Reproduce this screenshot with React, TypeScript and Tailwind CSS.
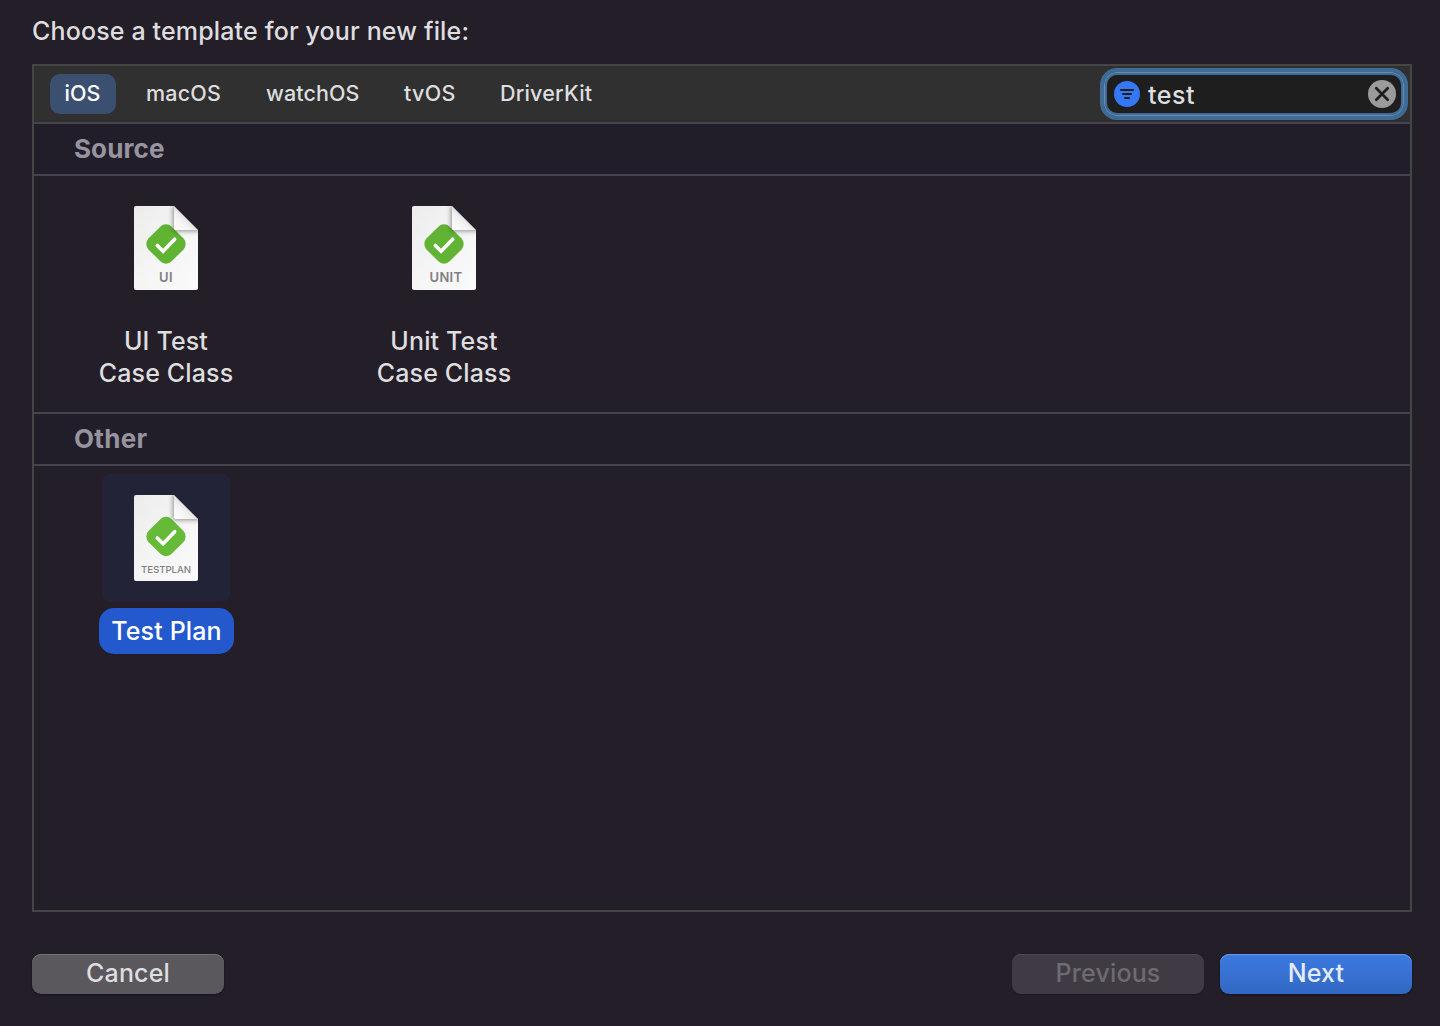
import { useId } from "react";

function DocumentIcon({ label, labelSize, labelSpacing, labelX = 32, labelY = 76, checkY = 38, height = 84, green = "#61b333" }: {
  label: string;
  labelSize: number;
  labelSpacing: number;
  labelX?: number;
  labelY?: number;
  checkY?: number;
  height?: number;
  green?: string;
}) {
  const id = useId();
  return (
    <svg width="64" height={height} viewBox={`0 0 64 ${height}`} className="block overflow-visible">
      <defs>
        <linearGradient id={`${id}page`} x1="0" y1="0" x2="1" y2="1">
          <stop offset="0" stopColor="#ececec" />
          <stop offset="0.5" stopColor="#f5f5f5" />
          <stop offset="1" stopColor="#fafafa" />
        </linearGradient>
        <linearGradient id={`${id}fold`} x1="0" y1="1" x2="0.55" y2="0.4">
          <stop offset="0" stopColor="#ffffff" />
          <stop offset="0.6" stopColor="#f3f3f3" />
          <stop offset="1" stopColor="#dcdcdc" />
        </linearGradient>
        <filter id={`${id}blur`} x="-50%" y="-50%" width="200%" height="200%">
          <feGaussianBlur stdDeviation="2.6" />
        </filter>
        <clipPath id={`${id}clip`}>
          <path d={`M2 0H40L64 24V${height - 2}a2 2 0 0 1-2 2H2a2 2 0 0 1-2-2V2a2 2 0 0 1 2-2Z`} />
        </clipPath>
      </defs>
      <g clipPath={`url(#${id}clip)`}>
        <rect width="64" height={height} fill={`url(#${id}page)`} />
        <rect x="15.75" y={checkY - 16.25} width="32.5" height="32.5" rx="8" fill={green} transform={`rotate(45 32 ${checkY})`} />
        <path d="M39 0V25H66V21L44 -1Z" fill="#000" opacity="0.42" filter={`url(#${id}blur)`} />
        <path d="M40 0L64 24H41.5a1.5 1.5 0 0 1-1.5-1.5Z" fill={`url(#${id}fold)`} />
      </g>
      <path d={`M23.3 ${checkY + 1.5}L29.1 ${checkY + 7.3}L40.7 ${checkY - 4.8}`} fill="none" stroke="#fff" strokeWidth="3.6" strokeLinecap="round" strokeLinejoin="miter" />
      <text x={labelX} y={labelY} textAnchor="middle" fontSize={labelSize} letterSpacing={labelSpacing} fontWeight={labelSize > 11 ? 600 : 450} fill="#808080">
        {label}
      </text>
    </svg>
  );
}

function SectionHeader({ title, className }: { title: string; className: string }) {
  return (
    <h2 className={`flex h-[54px] items-center border-y-2 border-[#45434b] bg-[#211e29] pl-10 text-[26px] leading-8 font-bold text-[#98949f] ${className}`}>
      {title}
    </h2>
  );
}

const tabs = [
  { name: "macOS", className: "ml-[30px] w-[75px] tracking-[0.2px]" },
  { name: "watchOS", className: "ml-[45px] w-[94px] tracking-[0.1px]" },
  { name: "tvOS", className: "ml-[44px] w-[52px] tracking-[0.3px]" },
  { name: "DriverKit", className: "ml-[44px] w-[92px] tracking-[0.2px]" },
];

export default function App() {
  return (
    <main className="flex h-[1026px] w-[1440px] flex-col overflow-hidden bg-[#231e28] px-8 font-['Inter',sans-serif] text-[25px] leading-8 font-[450] tracking-[0.15px] text-[#dedddf]">
      <h1 className="mt-[15px] h-[49px] whitespace-nowrap">Choose a template for your new file:</h1>

      <section className="flex h-[848px] w-[1380px] shrink-0 flex-col border-2 border-[#454545]">
        <nav className="flex h-14 shrink-0 items-center bg-[#303030] pl-4 text-[21.5px] whitespace-nowrap">
          <button className="h-10 w-[66px] rounded-[10px] bg-[#3b5070] pr-px pb-0.5 text-white">iOS</button>
          {tabs.map((tab) => (
            <button key={tab.name} className={`pb-0.5 text-left ${tab.className}`}>{tab.name}</button>
          ))}
          <div className="mr-[2px] ml-auto flex h-[52px] w-[308px] items-center rounded-[17px] border-4 border-[#3f6b94] bg-[#1e1e1e] px-2.5 text-[25px] shadow-[inset_0_0_0_1px_#5f8eba,inset_0_0_0_3px_#3f6b94]">
            <svg width="26" height="26" viewBox="0 0 26 26">
              <circle cx="13" cy="13" r="13" fill="#3478f6" />
              <path d="M7 9H19M9 13H17M11 17H15" stroke="#1e1e1e" strokeWidth="2" strokeLinecap="round" />
            </svg>
            <span className="mt-px ml-2 tracking-[0.5px]">test</span>
            <svg width="28" height="28" viewBox="0 0 28 28" className="-mr-[2px] ml-auto">
              <circle cx="14" cy="14" r="14" fill="#9b9b9b" />
              <path d="M8.3 8.3L19.7 19.7M19.7 8.3L8.3 19.7" stroke="#1e1e1e" strokeWidth="2.7" strokeLinecap="round" />
            </svg>
          </div>
        </nav>

        <SectionHeader title="Source" className="tracking-[0.1px]" />
        <div className="flex h-[236px] shrink-0 pt-[30px] text-center">
          <div className="ml-[62px] flex w-[140px] flex-col items-center">
            <DocumentIcon label="UI" labelSize={13} labelSpacing={0.3} />
            <p className="mt-[35px] whitespace-nowrap">UI Test<br />Case Class</p>
          </div>
          <div className="ml-[138px] flex w-[140px] flex-col items-center">
            <DocumentIcon label="UNIT" labelSize={13} labelSpacing={0.3} labelX={34} />
            <p className="mt-[35px] whitespace-nowrap">Unit Test<br />Case Class</p>
          </div>
        </div>

        <SectionHeader title="Other" className="tracking-[0.3px]" />
        <div className="ml-[65px] flex w-[135px] flex-col items-start pt-2">
          <div className="ml-[3px] flex h-32 w-32 justify-center rounded-lg bg-[#222336] pt-[21px]">
            <DocumentIcon label="TESTPLAN" labelSize={9.6} labelSpacing={0} height={86} checkY={41.5} labelY={78} green="#65bb38" />
          </div>
          <div className="mt-1.5 h-[46px] w-[135px] rounded-[15px] bg-[#2458cd] pt-[7px] text-center whitespace-nowrap text-white">Test Plan</div>
        </div>
      </section>

      <footer className="mt-[42px] flex h-10 items-start gap-4">
        <button className="h-10 w-48 rounded-[9px] bg-[#5a575d] pb-[2px] shadow-[inset_0_1px_0_#77747a,0_1px_2px_#15121a]">Cancel</button>
        <button className="ml-auto h-10 w-48 rounded-[9px] bg-[#3f3a43] pb-[2px] text-[#6e6a72] shadow-[inset_0_1px_0_#4b464f,0_1px_1px_#1e1922]">Previous</button>
        <button className="mr-[-4px] h-10 w-48 rounded-[9px] bg-linear-to-b from-[#3c7ae0] to-[#3268c4] pb-[2px] text-[#e3ebf9] shadow-[inset_0_1px_0_#6799e8,0_1px_2px_#15121a]">Next</button>
      </footer>
    </main>
  );
}
